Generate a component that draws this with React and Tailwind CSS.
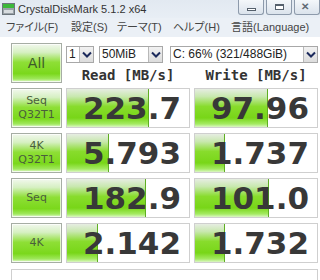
import React from "react";

const rows = [
  { a: "Seq", b: "Q32T1", read: "223.7", rw: 82, write: "97.96", ww: 73 },
  { a: "4K", b: "Q32T1", read: "5.793", rw: 42, write: "1.737", ww: 30 },
  { a: "Seq", read: "182.9", rw: 79, write: "101.0", ww: 74 },
  { a: "4K", read: "2.142", rw: 31, write: "1.732", ww: 30 },
];

const btnBg =
  "bg-[linear-gradient(to_bottom,#f2f8ee_0%,#d6f0c2_22%,#8edf36_48%,#7bd81c_78%,#9fe85c_92%,#e6f9d8_100%)]";
const barBg =
  "bg-[linear-gradient(to_bottom,#e6ede2_0%,#c8e8ae_20%,#88dc2c_46%,#78d618_76%,#a4ea62_92%,#dcf6c6_100%)]";

function Chevron() {
  return (
    <svg width="10" height="7" viewBox="0 0 10 7">
      <path d="M1 1.5 L5 5.5 L9 1.5" fill="none" stroke="#1c2a5c" strokeWidth="2" />
    </svg>
  );
}

function Select({ text, width }) {
  return (
    <div className={`flex h-[17px] items-stretch border border-[#a8a8a8] bg-white ${width}`}>
      <div className="flex-1 pl-[2px] text-[12px] leading-[15px] text-[#222]">{text}</div>
      <div className="flex w-[14px] items-center justify-center border-l border-[#b8b8b8] bg-[linear-gradient(to_bottom,#f2f2f2,#dcdcdc)]">
        <Chevron />
      </div>
    </div>
  );
}

function Label({ a, b }) {
  return (
    <div className={`flex h-[40px] flex-col items-center justify-center border border-[#a6ada4] shadow-[inset_0_0_0_1px_rgba(255,255,255,0.7)] ${btnBg} font-['DejaVu_Sans',sans-serif] text-[11px] leading-[14px] text-[#4a5e3c]`}>
      <span>{a}</span>
      {b && <span>{b}</span>}
    </div>
  );
}

function Value({ v, w }) {
  return (
    <div className="relative flex h-[40px] items-center justify-end border border-[#cfcfcf] bg-white pr-[8px]">
      <div
        className={`absolute left-0 top-0 bottom-0 border-r border-[#5fae22] ${barBg}`}
        style={{ width: w }}
      />
      <span className="relative font-['DejaVu_Sans',sans-serif] text-[31px] font-bold leading-none text-[#383838]">
        {v}
      </span>
    </div>
  );
}

export default function App() {
  return (
    <div className="h-[280px] w-[320px] overflow-hidden bg-white font-['Liberation_Sans','Noto_Sans_CJK_JP',sans-serif]">
      <div className="flex h-[18px] bg-[linear-gradient(to_bottom,#e2e9f1,#e8eef5)]">
        <svg className="ml-[2px] mt-[3px]" width="13" height="12" viewBox="0 0 13 12">
          <rect x="0.5" y="0.5" width="12" height="11" fill="#9aa2a8" stroke="#6d767c" />
          <rect x="1" y="1" width="11" height="4" fill="#3cb83a" />
          <rect x="2" y="7" width="9" height="3" fill="#d7dcdf" />
        </svg>
        <span className="ml-[3px] mt-[2px] text-[11px] leading-[14px] text-[#333]">CrystalDiskMark 5.1.2 x64</span>
        <div className="ml-auto flex gap-[2px] pl-[2px]">
          <div className="flex h-[15px] w-[26px] items-end justify-center rounded-b-[3px] border border-t-0 border-[#8d9aab] bg-[linear-gradient(to_bottom,#f4f7fa,#dbe3ec)] pb-[3px]">
            <div className="h-[3px] w-[9px] border border-[#55606c] bg-white" />
          </div>
          <div className="flex h-[15px] w-[26px] items-center justify-center rounded-b-[3px] border border-t-0 border-[#8d9aab] bg-[linear-gradient(to_bottom,#f4f7fa,#dbe3ec)]">
            <div className="h-[6px] w-[9px] border border-[#55606c] border-t-2 bg-white" />
          </div>
          <div className="flex h-[15px] w-[26px] items-center justify-start rounded-b-[3px] border border-t-0 border-[#8d9aab] bg-[linear-gradient(to_bottom,#f4f7fa,#dbe3ec)] pl-[6px] text-[10px] font-bold leading-none text-[#606a74]">
            ✕
          </div>
        </div>
      </div>
      <div className="flex h-[19px] items-center whitespace-nowrap bg-[#ebf0f6] pl-[6px] text-[11px] leading-none text-[#444] [font-feature-settings:'palt']">
        <span className="w-[65px]">ファイル(F)</span>
        <span className="w-[46px]">設定(S)</span>
        <span className="w-[56px]">テーマ(T)</span>
        <span className="w-[58px]">ヘルプ(H)</span>
        <span>言語(Language)</span>
      </div>
      <div className="pl-[11px] pt-[6px]">
        <div className="grid grid-cols-[51px_124px_124px] gap-x-[4px]">
          <div className={`flex h-[40px] items-center justify-center border border-[#a6ada4] shadow-[inset_0_0_0_1px_rgba(255,255,255,0.7)] ${btnBg} font-['DejaVu_Sans',sans-serif] text-[14px] text-[#3e5a2a]`}>
            All
          </div>
          <div className="col-span-2 flex flex-col">
            <div className="mt-[3px] flex items-center">
              <Select text="1" width="w-[28px]" />
              <Select text="50MiB" width="ml-[5px] w-[64px] " />
              <Select text="C: 66% (321/488GiB)" width="ml-[7px] w-[148px]" />
            </div>
            <div className="mt-[3px] grid grid-cols-[124px_124px] gap-x-[4px] font-['DejaVu_Sans_Mono',monospace] text-[14px] font-bold leading-[18px] text-[#333]">
              <div className="text-center">Read [MB/s]</div>
              <div className="text-center">Write [MB/s]</div>
            </div>
          </div>
        </div>
        <div className="mt-[4px] grid grid-cols-[51px_124px_124px] gap-x-[4px] gap-y-[5px]">
          {rows.map((r, i) => (
            <React.Fragment key={i}>
              <Label a={r.a} b={r.b} />
              <Value v={r.read} w={r.rw} />
              <Value v={r.write} w={r.ww} />
            </React.Fragment>
          ))}
        </div>
        <div className="mt-[6px] h-[20px] w-[307px] border border-[#cfcfcf] bg-white" />
      </div>
    </div>
  );
}
